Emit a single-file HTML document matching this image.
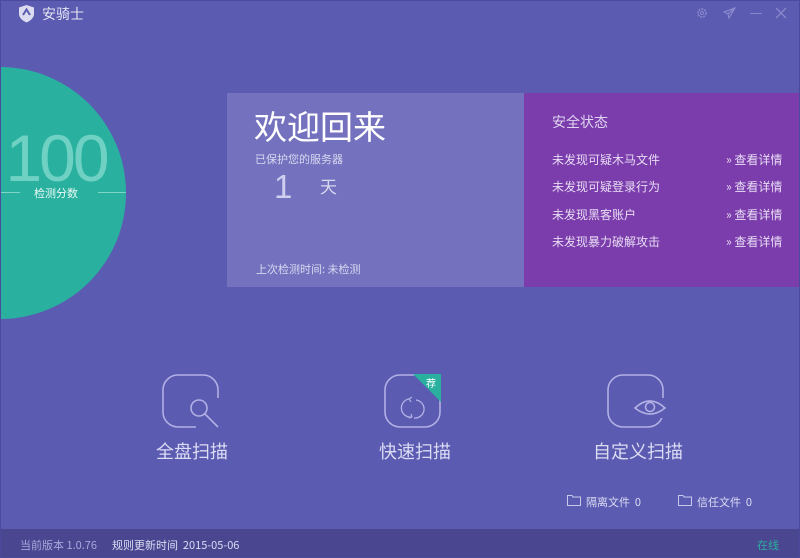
<!DOCTYPE html>
<html><head><meta charset="utf-8"><style>
*{margin:0;padding:0;box-sizing:border-box}
body{width:800px;height:558px;overflow:hidden;background:#5b5bb2;font-family:"Liberation Sans","Noto Sans CJK SC",sans-serif;position:relative;color:#fff}
.abs{position:absolute}
.cn{font-family:"Noto Sans CJK SC","WenQuanYi Zen Hei",sans-serif}
</style></head><body>
<div class="abs" style="left:0;top:0;width:800px;height:558px;border:1px solid #4c4a9c;z-index:5;pointer-events:none"></div>
<svg class="abs" style="left:18px;top:4px" width="17" height="19" viewBox="0 0 17 19"><path d="M8.5 1 L16 3.5 V10 C16 14 12 17 8.5 18.5 C5 17 1 14 1 10 V3.5Z" fill="#dcdcf0"/><path d="M5 11 L8.5 5.5 L12 11" stroke="#5b5bb2" stroke-width="2" fill="none"/></svg>
<div class="abs cn" style="left:42px;top:4px;font-size:14px;color:#e4e4f4">安骑士</div>
<svg class="abs" style="left:696px;top:7px" width="12" height="12" viewBox="0 0 12 12"><circle cx="6" cy="6" r="4" fill="none" stroke="#8a88cc" stroke-width="1.6" stroke-dasharray="2 1"/><circle cx="6" cy="6" r="1.5" fill="none" stroke="#8a88cc"/></svg>
<svg class="abs" style="left:723px;top:7px" width="13" height="12" viewBox="0 0 13 12"><path d="M12 1 L1 5 L5 7 L6 11 Z M5 7 L12 1" fill="none" stroke="#8a88cc" stroke-width="1.2"/></svg>
<div class="abs" style="left:750px;top:13px;width:12px;height:1px;background:#8a88cc"></div>
<svg class="abs" style="left:775px;top:7px" width="12" height="12"><path d="M1 1L11 11M11 1L1 11" stroke="#8a88cc" stroke-width="1.3"/></svg>
<div class="abs" style="left:-126px;top:67px;width:252px;height:252px;border-radius:50%;background:#29b09f"></div>
<svg class="abs" style="left:0;top:120px" width="126" height="70"><text x="56" y="61" text-anchor="middle" font-size="66" font-family="Liberation Sans" fill="#a8ece0" fill-opacity="0.55" letter-spacing="-3">100</text></svg>
<div class="abs" style="left:0;top:192px;width:20px;height:1px;background:#7fd6c8"></div>
<div class="abs" style="left:98px;top:192px;width:28px;height:1px;background:#7fd6c8"></div>
<div class="abs cn" style="left:34px;top:185px;font-size:11px;color:#eafaf6">检测分数</div>
<div class="abs" style="left:227px;top:93px;width:297px;height:194px;background:#7472be"></div>
<div class="abs cn" style="left:254px;top:103px;font-size:33px;line-height:44px">欢迎回来</div>
<div class="abs cn" style="left:255px;top:151px;font-size:11px;color:#d8d8f0">已保护您的服务器</div>
<div class="abs" style="left:274px;top:168px;font-size:33px;color:#d0cff0;font-weight:300">1</div>
<div class="abs cn" style="left:320px;top:173px;font-size:17px;color:#d8d8f0">天</div>
<div class="abs cn" style="left:256px;top:261px;font-size:11px;color:#d8d8f0">上次检测时间: 未检测</div>
<div class="abs" style="left:524px;top:93px;width:276px;height:194px;background:#7b3dac"></div>
<div class="abs cn" style="left:552px;top:112px;font-size:14px;color:#e0d4f0">安全状态</div>
<div class="abs cn" style="left:552px;top:146px;font-size:12px;line-height:27.3px;color:#e8dcf4">未发现可疑木马文件<br>未发现可疑登录行为<br>未发现黑客账户<br>未发现暴力破解攻击</div>
<div class="abs cn" style="left:726px;top:146px;font-size:12px;line-height:27.3px;color:#e8dcf4">» 查看详情<br>» 查看详情<br>» 查看详情<br>» 查看详情</div>
<svg class="abs" style="left:162px;top:374px" width="62" height="58" viewBox="0 0 62 58"><rect x="1" y="1" width="55" height="52" rx="15" fill="none" stroke="#b2b0e4" stroke-width="1.6"/><rect x="34" y="24" width="28" height="34" fill="#5b5bb2"/><circle cx="37" cy="34" r="8" fill="none" stroke="#b2b0e4" stroke-width="1.6"/><path d="M43 40L56 53" stroke="#b2b0e4" stroke-width="1.6"/></svg>
<div class="abs cn" style="left:156px;top:438px;font-size:18px;color:#dcdcf4">全盘扫描</div>
<svg class="abs" style="left:384px;top:374px" width="60" height="58" viewBox="0 0 60 58"><rect x="1" y="1" width="55" height="52" rx="15" fill="none" stroke="#b2b0e4" stroke-width="1.6"/><path d="M29 0 H57 V28 Z" fill="#29b09f"/><text x="42" y="13" font-size="10" fill="#fff" font-family="Noto Sans CJK SC">荐</text><path d="M25 25 A9 9 0 0 0 28 43 M32 26 A9 9 0 0 1 30 44" fill="none" stroke="#b2b0e4" stroke-width="1.3"/><path d="M25 25l3-2M25 25l2 3M28 43l-3 1M28 43l-1-3" stroke="#b2b0e4" stroke-width="1.2"/></svg>
<div class="abs cn" style="left:379px;top:438px;font-size:18px;color:#dcdcf4">快速扫描</div>
<svg class="abs" style="left:607px;top:374px" width="64" height="58" viewBox="0 0 64 58"><rect x="1" y="1" width="55" height="52" rx="15" fill="none" stroke="#b2b0e4" stroke-width="1.6"/><rect x="34" y="24" width="28" height="20" fill="#5b5bb2"/><path d="M28 34 Q43 20 58 34 Q43 46 28 34Z" fill="#5b5bb2" stroke="#b2b0e4" stroke-width="1.6"/><circle cx="43" cy="33" r="4.5" fill="none" stroke="#b2b0e4" stroke-width="1.6"/></svg>
<div class="abs cn" style="left:593px;top:438px;font-size:18px;color:#dcdcf4">自定义扫描</div>
<svg class="abs" style="left:567px;top:495px" width="14" height="11"><path d="M.5 .5H5L6 2H13.5V10.5H.5Z" fill="none" stroke="#c8c8ec"/></svg>
<div class="abs cn" style="left:586px;top:494px;font-size:11px;color:#dcdcf4">隔离文件&nbsp; 0</div>
<svg class="abs" style="left:678px;top:495px" width="14" height="11"><path d="M.5 .5H5L6 2H13.5V10.5H.5Z" fill="none" stroke="#c8c8ec"/></svg>
<div class="abs cn" style="left:697px;top:494px;font-size:11px;color:#dcdcf4">信任文件&nbsp; 0</div>
<div class="abs" style="left:0;top:529px;width:800px;height:29px;background:#4a4790"></div>
<div class="abs cn" style="left:20px;top:537px;font-size:11px;color:#a9a7dc">当前版本 1.0.76</div>
<div class="abs cn" style="left:112px;top:537px;font-size:11px;color:#dcdcf4">规则更新时间&nbsp; 2015-05-06</div>
<div class="abs cn" style="left:757px;top:537px;font-size:11px;color:#29b09f">在线</div>
</body></html>
